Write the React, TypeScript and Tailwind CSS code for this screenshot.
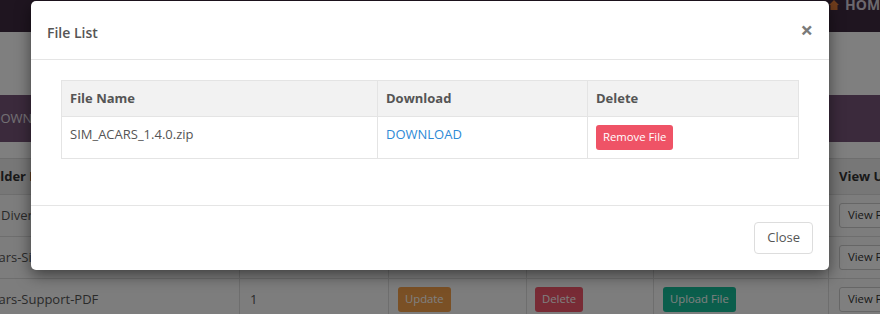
import React from "react";

const bgRows = [
  { name: "Diversions", shift: "ml-[0px]", num: "" },
  { name: "Acars-Simbrief", shift: "-ml-[17px]", num: "" },
  { name: "Acars-Support-PDF", shift: "-ml-[17px]", num: "1" },
];

export default function App() {
  return (
    <div className="relative w-[880px] h-[314px] overflow-hidden bg-white font-['Open_Sans',sans-serif]">
      {/* Underlying page */}
      <div className="flex flex-col">
        <nav className="h-[32px] bg-[#3e2a40] flex justify-end items-start">
          <div className="-mt-[6px] -mr-[8px] flex items-center gap-[5px] text-[14px] font-bold text-[#d8d0dc]">
            <svg width="12" height="12" viewBox="0 0 12 12" className="text-[#e07b39]">
              <path d="M6 1 L11 6 H9.5 V11 H2.5 V6 H1 Z" fill="currentColor" />
            </svg>
            <span>HOME</span>
          </div>
        </nav>
        <div className="h-[63px] bg-white" />
        <div className="h-[47px] bg-[#765478] flex items-center">
          <span className="-ml-[9px] text-[13px] text-[#e6e0e8]">DOWNLOADS</span>
        </div>
        <div className="h-[16px] bg-white" />
        <table className="-ml-[26px] border-collapse text-[13px] text-[#555] table-fixed w-[1000px]">
          <colgroup>
            <col className="w-[265px]" />
            <col className="w-[149px]" />
            <col className="w-[138px]" />
            <col className="w-[127px]" />
            <col className="w-[175px]" />
            <col className="w-[146px]" />
          </colgroup>
          <thead>
            <tr className="h-[36px] bg-[#eeeeee]">
              <th className="border border-[#dddddd] text-left px-[10px] font-bold text-[#333]">Folder Name</th>
              <th className="border border-[#dddddd] text-left px-[10px] font-bold text-[#333]">Files</th>
              <th className="border border-[#dddddd] text-left px-[10px] font-bold text-[#333]">Update</th>
              <th className="border border-[#dddddd] text-left px-[10px] font-bold text-[#333]">Delete</th>
              <th className="border border-[#dddddd] text-left px-[10px] font-bold text-[#333]">Upload</th>
              <th className="border border-[#dddddd] text-left px-[10px] font-bold text-[#333]">View Uploads</th>
            </tr>
          </thead>
          <tbody>
            {bgRows.map((r, i) => (
              <tr key={i} className="h-[42px] bg-[#fbfbfb]">
                <td className="border border-[#dddddd] px-[10px] overflow-hidden whitespace-nowrap">
                  <div className={"pl-[16px] " + r.shift}>{r.name}</div>
                </td>
                <td className="border border-[#dddddd] px-[10px]">{r.num}</td>
                <td className="border border-[#dddddd] px-[9px]">
                  <span className="inline-flex h-[25px] items-center px-[7px] rounded-[3px] bg-[#f5a04a] text-white text-[11.3px]">Update</span>
                </td>
                <td className="border border-[#dddddd] px-[8px]">
                  <span className="inline-flex h-[25px] items-center px-[7px] rounded-[3px] bg-[#f0566a] text-white text-[11.3px]">Delete</span>
                </td>
                <td className="border border-[#dddddd] px-[9px]">
                  <span className="inline-flex h-[25px] items-center px-[7px] rounded-[3px] bg-[#17bc99] text-white text-[11.3px]">Upload File</span>
                </td>
                <td className="border border-[#dddddd] px-[10px]">
                  <span className="inline-flex h-[25px] items-center px-[8px] rounded-[3px] bg-white border border-[#cccccc] text-[#333] text-[11.3px] whitespace-nowrap">View Files</span>
                </td>
              </tr>
            ))}
          </tbody>
        </table>
      </div>

      {/* Backdrop */}
      <div className="absolute inset-0 bg-black/50" />

      {/* Modal */}
      <div className="absolute left-[31px] top-[1px] w-[798px] h-[269px] bg-white rounded-[5px] shadow-[0_5px_15px_rgba(0,0,0,0.5)] flex flex-col">
        <div className="h-[59px] border-b border-[#e5e5e5] flex items-center justify-between pl-[16px] pr-[16px]">
          <h4 className="text-[14px] font-semibold text-[#555] mt-[4px]">File List</h4>
          <span className="text-[22px] leading-none font-bold text-[#7a7a7a] -mt-[2px]">×</span>
        </div>
        <div className="px-[30px] pt-[20px] pb-[46px]">
          <table className="w-full border-collapse table-fixed text-[13px] text-[#555]">
            <colgroup>
              <col className="w-[316px]" />
              <col className="w-[210px]" />
              <col />
            </colgroup>
            <thead>
              <tr className="h-[36px] bg-[#f2f2f2]">
                <th className="border border-[#e4e4e4] text-left px-[8px] font-bold">File Name</th>
                <th className="border border-[#e4e4e4] text-left px-[8px] font-bold">Download</th>
                <th className="border border-[#e4e4e4] text-left px-[8px] font-bold">Delete</th>
              </tr>
            </thead>
            <tbody>
              <tr className="h-[42px]">
                <td className="border border-[#e4e4e4] px-[8px] align-top pt-[8px]">SIM_ACARS_1.4.0.zip</td>
                <td className="border border-[#e4e4e4] px-[8px] align-top pt-[8px] text-[#2d8ad6]">DOWNLOAD</td>
                <td className="border border-[#e4e4e4] px-[8px] align-top pt-[8px]">
                  <span className="inline-flex h-[25px] items-center px-[7px] rounded-[3px] bg-[#ef5366] text-white text-[11.3px]">Remove File</span>
                </td>
              </tr>
            </tbody>
          </table>
        </div>
        <div className="flex-1 border-t border-[#e5e5e5] flex justify-end items-start pt-[16px] pr-[16px]">
          <span className="inline-flex h-[32px] items-center px-[12px] rounded-[4px] border border-[#dddddd] bg-white text-[13px] text-[#555]">Close</span>
        </div>
      </div>
    </div>
  );
}
